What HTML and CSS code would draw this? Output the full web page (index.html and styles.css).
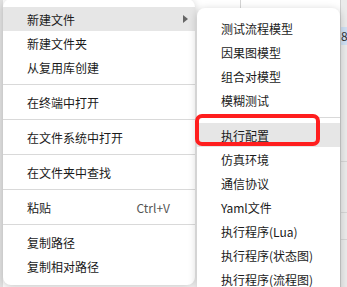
FILE: index.html
```html
<!DOCTYPE html>
<html lang="zh-CN">
<head>
    <meta charset="UTF-8">
    <meta name="viewport" content="width=device-width, initial-scale=1.0">
    <title>右键菜单</title>
    <link rel="stylesheet" href="styles.css">
</head>
<body>
    <div class="backdrop">
        <div class="sheet">
            <div class="head">
                <span class="cell c1"></span>
                <span class="cell c2"></span>
            </div>
        </div>
        <div class="side">
            <div class="side-row sel">8</div>
            <div class="side-row tall"></div>
            <div class="side-row mid"></div>
            <div class="side-row short"></div>
        </div>
    </div>

    <div class="menu main">
        <div class="item active">新建文件<span class="arrow"></span></div>
        <div class="item">新建文件夹</div>
        <div class="item">从复用库创建</div>
        <div class="sep"></div>
        <div class="item">在终端中打开</div>
        <div class="sep"></div>
        <div class="item">在文件系统中打开</div>
        <div class="sep"></div>
        <div class="item">在文件夹中查找</div>
        <div class="sep"></div>
        <div class="item">粘贴<span class="key">Ctrl+V</span></div>
        <div class="sep"></div>
        <div class="item">复制路径</div>
        <div class="item">复制相对路径</div>
    </div>

    <div class="menu sub">
        <div class="item">测试流程模型</div>
        <div class="item">因果图模型</div>
        <div class="item">组合对模型</div>
        <div class="item">模糊测试</div>
        <div class="sep"></div>
        <div class="item active marked">执行配置<span class="mark"></span></div>
        <div class="item">仿真环境</div>
        <div class="item">通信协议</div>
        <div class="item">Yaml文件</div>
        <div class="item">执行程序(Lua)</div>
        <div class="item">执行程序(状态图)</div>
        <div class="item">执行程序(流程图)</div>
    </div>
</body>
</html>
```

FILE: styles.css
```css
html, body {
    margin: 0;
    height: 100%;
    overflow: hidden;
}
body {
    position: relative;
    background: #fff;
    color: #1a1a1a;
    font-family: "Noto Sans CJK SC", "Noto Sans", sans-serif;
    font-size: 12px;
}
.backdrop {
    display: flex;
    height: 100%;
    background: #e4e4e4;
}
.sheet {
    flex: 1;
    background: #fff;
    margin-left: 3px;
}
.head {
    display: flex;
    height: 8px;
}
.cell {
    display: block;
    height: 8px;
}
.c1 {
    width: 237px;
}
.c2 {
    flex: 1;
    border-left: 1px solid #d4d4d4;
}
.side {
    width: 6px;
    background: #ebebeb;
    border-left: 1px solid #cfcfcf;
    padding-top: 27px;
}
.side-row {
    border-bottom: 1px solid #d6d6d6;
}
.side-row.sel {
    height: 18px;
    background: #cfe0f4;
    border-bottom: none;
    line-height: 18px;
    overflow: hidden;
    color: #333;
}
.side-row.tall {
    height: 116px;
}
.side-row.mid {
    height: 50px;
}
.side-row.short {
    height: 26px;
}
.menu {
    position: absolute;
    background: #fff;
    border-radius: 8px;
    box-shadow: 0 2px 8px rgba(0, 0, 0, 0.22);
}
.menu.main {
    left: 3px;
    top: -1px;
    width: 192px;
    padding: 8px 0 7px;
}
.menu.sub {
    left: 197px;
    top: 8px;
    width: 143px;
    padding: 8px 0;
}
.item {
    position: relative;
    display: flex;
    align-items: center;
    height: 24px;
    padding-left: 24px;
    white-space: nowrap;
}
.item.active {
    background: #e6e6e6;
}
.arrow {
    margin-left: auto;
    margin-right: 7px;
    width: 0;
    height: 0;
    border-left: 5px solid #666;
    border-top: 4px solid transparent;
    border-bottom: 4px solid transparent;
}
.key {
    margin-left: auto;
    margin-right: 25px;
    color: #555;
}
.sep {
    height: 1px;
    margin: 5px 0;
    background: #d9d9d9;
}
.mark {
    position: absolute;
    left: -2px;
    top: -9px;
    width: 125px;
    height: 32px;
    box-sizing: border-box;
    border: 4px solid #ff1e1e;
    border-radius: 7px;
}
```
